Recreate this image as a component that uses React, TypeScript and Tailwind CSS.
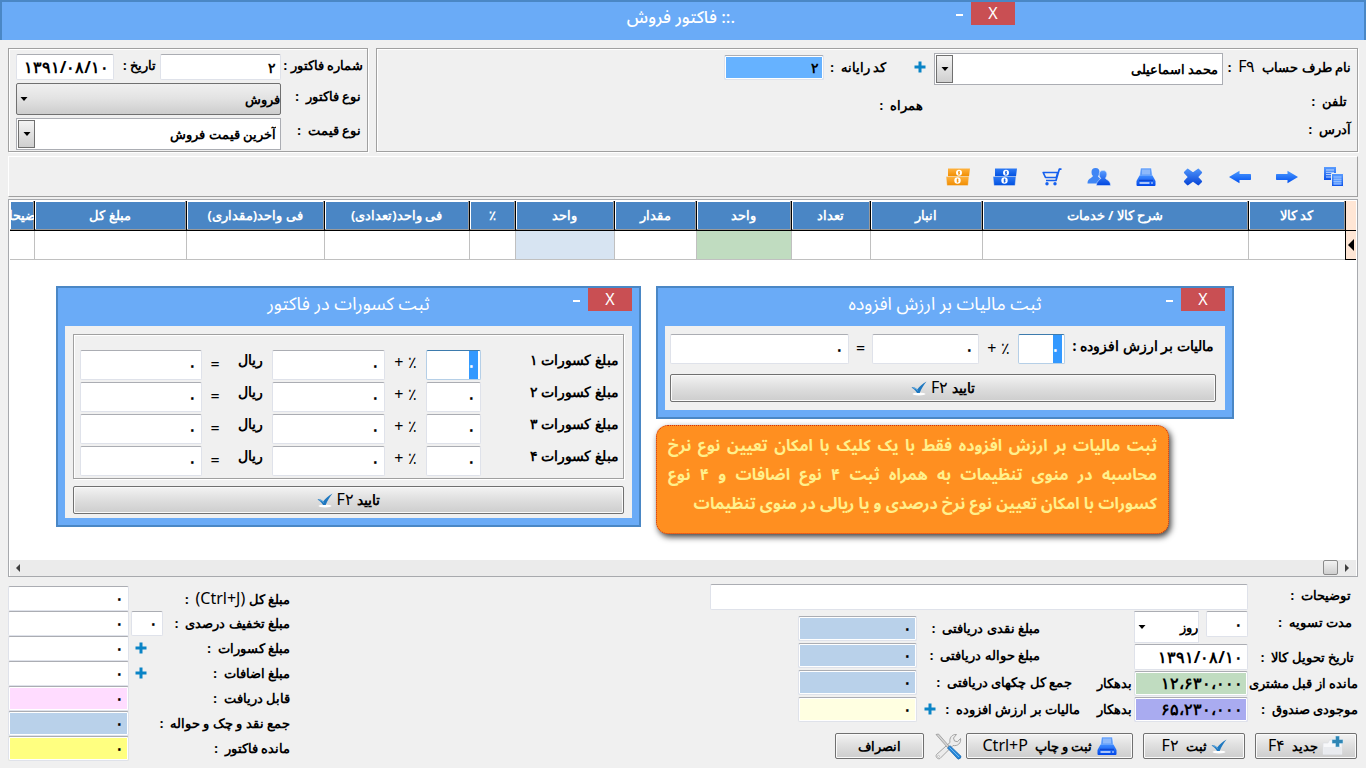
import type { ReactNode } from "react";

const field = "block min-w-0 rounded-xs border px-1 text-right font-bold outline-none";
const edge = "border-[#dfe2ea] border-t-[#abadb3]";
const plain = `${field} ${edge} bg-white text-base`;
const zero = `${field} ${edge} h-[25px] flex-none text-base shadow-[inset_0_0_0_1px_#fff]`;
const selected = `${field} border-[#b5cfe7] border-t-[#3d7bad] bg-[linear-gradient(to_left,#fff_2px,#3399ff_2px,#3399ff_11px,#fff_11px)] text-base text-white`;
const groove = "border border-[#a0a0a0] shadow-[1px_1px_0_#fff,inset_1px_1px_0_#fff]";
const button = "flex items-center justify-center rounded-xs border border-[#707070] bg-linear-to-b from-[#f3f3f3] from-0% via-[#dedede] via-50% to-[#cdcdcd] font-bold shadow-[inset_0_0_0_1px_#fafafa]";

/* Icons */
function PlusIcon() {
    return (
        <svg viewBox="0 0 12 12" className="size-3">
            <path d="M4.500 .5h3v4h4v3h-4v4h-3v-4h-4v-3h4z" fill="#0a84c6" />
        </svg>
    );
}

function CheckIcon() {
    return (
        <svg viewBox="0 0 16 16" className="size-4">
            <ellipse cx="8" cy="14" rx="6.500" ry="1.500" fill="#fff" />
            <path d="M.5 7.500c2-.5 4.200.3 5.700 2C8.500 6.500 11.500 3.500 15.500 1.500c-3 3.500-5 7-6.800 11.500H6C5 11 3 9 .5 7.500z" fill="#1f78c0" />
            <path d="M2.500 8c1.800.2 3 1 4 2.500" stroke="#6db6ea" fill="none" />
        </svg>
    );
}

function Gradient({ id, from, to }: { id: string; from: string; to: string }) {
    return (
        <defs>
            <linearGradient id={id} x1="0" y1="0" x2="0" y2="1">
                <stop offset="0" stopColor={from} />
                <stop offset="1" stopColor={to} />
            </linearGradient>
        </defs>
    );
}

function PrinterIcon() {
    return (
        <svg viewBox="0 0 20 20" className="size-5">
            <Gradient id="printer" from="#3f8cff" to="#0046e8" />
            <path d="M4.500 1h11l1 8h-13z" fill="#5f9cf8" stroke="#fff" strokeWidth=".6" />
            <path d="M6 2.500h8v5H6z" fill="#8db9fb" />
            <path d="M3.500 8.500h13l3 5.500v4q0 1-1 1h-17q-1 0-1-1v-4z" fill="url(#printer)" />
            <path d="M3 13.300h14" stroke="#0a3fc8" strokeWidth="1" />
            <path d="M3.500 16h10" stroke="#fff" strokeWidth="1.300" />
            <circle cx="16" cy="16" r=".8" fill="#fff" />
        </svg>
    );
}

function CopyIcon() {
    return (
        <svg viewBox="0 0 20 20" className="size-5">
            <Gradient id="copy" from="#5a9dff" to="#0a50e8" />
            <path d="M0 0h12v13H0z" fill="url(#copy)" />
            <path d="M2 3h8M2 5.300h8M2 7.600h8M2 10h8" stroke="#d3e5ff" strokeWidth=".9" />
            <path d="M7.500 6.500h12v13h-12z" fill="url(#copy)" stroke="#f0f0f0" />
            <path d="M9.500 8.500h8v9h-8z" fill="#5c9bff" />
            <path d="M9.500 10h8M9.500 12.300h8M9.500 14.600h8M9.500 17h8" stroke="#a9ccff" strokeWidth=".8" />
        </svg>
    );
}

function ArrowIcon({ flip }: { flip?: boolean }) {
    return (
        <svg viewBox="0 0 22 14" className={flip ? "h-[14px] w-[22px] -scale-x-100" : "h-[14px] w-[22px]"}>
            <Gradient id="arrow" from="#4e9bff" to="#0050f0" />
            <path d="M0 4.700q0-.7.700-.7h10.800V.8L22 7l-10.500 6.200V10H.7q-.7 0-.7-.7z" fill="url(#arrow)" />
        </svg>
    );
}

function DeleteIcon() {
    return (
        <svg viewBox="0 0 18 18" className="size-5">
            <Gradient id="delete" from="#4a8ff8" to="#0a48d8" />
            <path d="M4.300 2.500 9 6l4.700-3.500 2.500 2.500L12.500 9l3.700 4-2.500 2.500L9 12l-4.700 3.500L1.800 13l3.700-4-3.700-4z" fill="url(#delete)" stroke="url(#delete)" strokeLinejoin="round" strokeWidth="2" />
        </svg>
    );
}

function UsersIcon() {
    return (
        <svg viewBox="0 0 24 20" className="h-5 w-6">
            <Gradient id="users" from="#5a9dff" to="#0046e0" />
            <path d="M8.500 1c3 0 4.200 2 4 4.500-.2 2-1 3-1.500 4 1 1.500 3.500 2 3.500 7H.5c0-5 4-5 5.500-7.500-1-1-1.500-2-1.500-4C4.500 2.500 6 1 8.500 1z" fill="#3f86f5" />
            <path d="M16 3.500c3 0 4 2 3.800 4.300-.2 1.700-.9 2.500-1.400 3.400 1.200 2 5.100 2 5.100 7.300H9.500c0-4.500 3-5 4.300-7.300-1-1-1.500-1.700-1.600-3.400C12 5.500 13.200 3.500 16 3.500z" fill="url(#users)" stroke="#cfe0fa" strokeWidth=".6" />
        </svg>
    );
}

function CartIcon() {
    return (
        <svg viewBox="0 0 20 18" className="h-[18px] w-5">
            <path d="M19.500 1.200h-2.200L14 12.500H4M1.200 4.500h14.600l-1.500 5H3.500z" fill="none" stroke="#1660ee" strokeWidth="1.700" strokeLinejoin="round" />
            <circle cx="5" cy="15.700" r="1.700" fill="#1660ee" />
            <circle cx="13" cy="15.700" r="1.700" fill="#1660ee" />
        </svg>
    );
}

function MoneyIcon({ id, from, to }: { id: string; from: string; to: string }) {
    return (
        <svg viewBox="0 0 24 18" className="h-[18px] w-6">
            <Gradient id={id} from={from} to={to} />
            <path d="M2 .5h22L23 8.500H2z" fill={`url(#${id})`} />
            <circle cx="13" cy="4.800" r="3" fill="#fff" />
            <path d="M14 3.800h-1.500v1.100h1V6H12M13 3v3.600" stroke={to} strokeWidth=".7" fill="none" />
            <path d="M0 8.500h23l-1 9H1z" fill={`url(#${id})`} stroke="#f0f0f0" strokeWidth=".4" />
            <circle cx="11.500" cy="12.500" r="3.200" fill="#fff" />
            <path d="M12.600 11.400H11v1.200h1.200v1.200h-1.600M11.500 10.500v4" stroke={to} strokeWidth=".7" fill="none" />
        </svg>
    );
}

function NewIcon() {
    return (
        <svg viewBox="0 0 22 20" className="h-5 w-[22px]">
            <path d="M1 7h5l1.500-3H15l5 4v10.500H1z" fill="#f7f8fa" stroke="#dcdfe4" strokeWidth=".7" />
            <path d="M1.500 11h18v7h-18z" fill="#e9ebef" />
            <path d="M13.500 0h4v3.500H21v4h-3.500V11h-4V7.500H10v-4h3.500z" fill="#2f86b5" stroke="#d7ecf8" strokeWidth=".5" />
        </svg>
    );
}

function ToolsIcon() {
    return (
        <svg viewBox="0 0 28 28" className="size-7">
            <path d="M2.500 22.500 16 10.500c-1-4.500 2-8.500 6.500-8l-3 3.500 1 3 3 .7 3-3.200c1 4.500-3 8-7.500 7L6 26.500c-2 1.200-5-1.500-3.500-4z" fill="#ececec" stroke="#9b9b9b" strokeWidth=".9" />
            <circle cx="4.500" cy="24.300" r="1" fill="#fff" stroke="#9b9b9b" strokeWidth=".5" />
            <path d="m2 2.500 2.500-.5L15 14l-1.500 1.500z" fill="#d4d4d4" stroke="#8d8d8d" strokeWidth=".7" />
            <path d="m13.500 16 2.500-2.300 11 10.500q.5 2.300-3 3z" fill="#2586d8" stroke="#1664ab" strokeWidth=".7" />
            <path d="m15.500 15.500 9.500 9.500" stroke="#7dc0f5" strokeWidth=".9" />
        </svg>
    );
}

function DownArrow() {
    return (
        <svg viewBox="0 0 8 4" className="h-1 w-2">
            <path d="M.5 0h7L4 4z" fill="#000" />
        </svg>
    );
}

function Latin({ children }: { children: ReactNode }) {
    return <span className="text-base leading-5 font-normal">{children}</span>;
}

/* Label text followed by a spaced colon */
function Colon({ children }: { children: ReactNode }) {
    return <>{children}&nbsp; :</>;
}

/* Drop-down with its own arrow on the left side */
type SelectProps = { id: string; value: string; size: string; look: "combo" | "button" | "plain" };

function Select({ id, value, size, look }: SelectProps) {
    const looks = {
        combo: "border-[#abadb3] bg-white pr-1",
        button: "rounded-xs border-[#707070] bg-linear-to-b from-[#f0f0f0] from-0% via-[#e2e2e2] via-50% to-[#cdcdcd]",
        plain: "border-[#dfe2ea] border-t-[#abadb3] bg-white",
    };
    return (
        <div className={`relative ${size}`}>
            <select id={id} className={`h-full w-full appearance-none border pl-6 font-bold outline-none ${looks[look]}`}>
                <option>{value}</option>
            </select>
            <span
                className={
                    look === "combo"
                        ? "pointer-events-none absolute inset-y-0.5 left-0.5 flex w-[17px] items-center justify-center border border-[#707070] bg-linear-to-b from-[#f3f3f3] to-[#cfcfcf]"
                        : "pointer-events-none absolute inset-y-0 left-1 flex items-center"
                }
            >
                <DownArrow />
            </span>
        </div>
    );
}

function WindowButtons() {
    return (
        <div className="flex items-start">
            <button className="h-[23px] w-11 bg-[#c94f53] text-base leading-[23px] text-white">X</button>
            <button aria-label="کوچک کردن" className="flex h-[26px] w-6 items-center justify-center">
                <span className="h-0.5 w-[7px] bg-white" />
            </button>
        </div>
    );
}

function Dialog({ title, size, children }: { title: string; size: string; children: ReactNode }) {
    return (
        <section className={`border-2 border-[#4a87c5] bg-[#6aabf7] px-[7px] pb-[7px] ${size}`}>
            <header className="grid h-[38px] grid-cols-[1fr_auto_1fr]">
                <WindowButtons />
                <h2 className="pt-0.5 font-['Noto_Sans_Arabic',sans-serif] text-lg text-white">{title}</h2>
            </header>
            <div className="bg-[#f0f0f0]">{children}</div>
        </section>
    );
}

function ConfirmButton() {
    return (
        <button className={`${button} h-7 w-full gap-1 text-sm`}>
            <span>تایید <Latin>F۲</Latin></span>
            <CheckIcon />
        </button>
    );
}

function TaxDialog() {
    return (
        <Dialog title="ثبت مالیات بر ارزش افزوده" size="w-full">
            <div className="flex flex-col gap-2.5 pt-2 pr-[9px] pb-2 pl-[5px]">
                <div className="flex items-start text-base">
                    <label htmlFor="tax" className="w-[151px] pt-0.5 pr-0.5 text-sm font-bold">مالیات بر ارزش افزوده :</label>
                    <input id="tax" defaultValue="۰" className={`${selected} h-[30px] w-[47px]`} />
                    <span className="w-[39px] pt-0.5 text-center">٪ +</span>
                    <input aria-label="مبلغ مالیات" defaultValue="۰" className={`${plain} h-[30px] w-[107px]`} />
                    <span className="w-[23px] pt-0.5 text-center">=</span>
                    <input aria-label="جمع مالیات" defaultValue="۰" className={`${plain} h-[30px] flex-1`} />
                </div>
                <ConfirmButton />
            </div>
        </Dialog>
    );
}

function DeductionsDialog() {
    return (
        <Dialog title="ثبت کسورات در فاکتور" size="w-[585px]">
            <div className="flex flex-col gap-[7px] px-2 pt-2 pb-1">
                <div className={`${groove} flex flex-col gap-0.5 pt-[15px] pr-1 pb-0.5 pl-1.5`}>
                    {["۱", "۲", "۳", "۴"].map((n, i) => (
                        <div key={n} className="flex items-start text-base">
                            <label htmlFor={`kosurat-${n}`} className="w-[138px] text-sm font-bold">مبلغ کسورات {n}</label>
                            <input id={`kosurat-${n}`} defaultValue="۰" className={`${i === 0 ? selected : plain} h-[30px] w-[55px]`} />
                            <span className="w-[41px] text-center">٪ +</span>
                            <input aria-label={`مبلغ ${n}`} defaultValue="۰" className={`${plain} h-[30px] w-[113px]`} />
                            <span className="w-[44px] text-center text-sm font-bold">ریال</span>
                            <span className="w-[26px] pt-0.5 text-center">=</span>
                            <input aria-label={`جمع ${n}`} defaultValue="۰" className={`${plain} h-[30px] flex-1`} />
                        </div>
                    ))}
                </div>
                <ConfirmButton />
            </div>
        </Dialog>
    );
}

const columns = [
    { name: "کد کالا", width: "w-[97px]", cell: "" },
    { name: "شرح کالا / خدمات", width: "", cell: "" },
    { name: "انبار", width: "w-[112px]", cell: "" },
    { name: "تعداد", width: "w-[79px]", cell: "" },
    { name: "واحد", width: "w-[95px]", cell: "bg-[#c0dcc0]" },
    { name: "مقدار", width: "w-[82px]", cell: "" },
    { name: "واحد", width: "w-[99px]", cell: "bg-[#d7e4f2]" },
    { name: "٪", width: "w-[46px]", cell: "" },
    { name: "فی واحد(تعدادی)", width: "w-[145px]", cell: "" },
    { name: "فی واحد(مقداری)", width: "w-[138px]", cell: "" },
    { name: "مبلغ کل", width: "w-[152px]", cell: "" },
    { name: "توضیحات", width: "w-6", cell: "" },
];

function ItemsTable() {
    return (
        <table className="w-full table-fixed border-collapse">
            <thead>
                <tr className="h-[29px] border-b border-black">
                    <th className="w-[11px] border-l border-black bg-[#ffe6d5]" />
                    {columns.map((c, i) => (
                        <th key={i} scope="col" className={`overflow-hidden border-l border-black bg-[#4a86c5] p-0 font-bold whitespace-nowrap text-white shadow-[inset_-1px_-1px_0_#9a9a9a,inset_1px_1px_0_#fff] last:border-l-0 ${c.width}`}>
                            <span className="flex justify-center">{c.name}</span>
                        </th>
                    ))}
                </tr>
            </thead>
            <tbody>
                <tr className="h-[29px] border-b border-[#c0c0c0]">
                    <td className="border-b border-l border-black bg-[#ffe6d5] p-0">
                        <svg viewBox="0 0 6 12" className="mx-auto h-3 w-1.5">
                            <path d="M6 0v12L0 6z" />
                        </svg>
                    </td>
                    {columns.map((c, i) => (
                        <td key={i} className={`border-l border-[#c0c0c0] last:border-l-0 ${c.cell}`} />
                    ))}
                </tr>
            </tbody>
        </table>
    );
}

const tools = [
    { name: "کپی", icon: <CopyIcon /> },
    { name: "بعدی", icon: <ArrowIcon /> },
    { name: "قبلی", icon: <ArrowIcon flip /> },
    { name: "حذف", icon: <DeleteIcon /> },
    { name: "چاپ", icon: <PrinterIcon /> },
    { name: "اشخاص", icon: <UsersIcon /> },
    { name: "خرید", icon: <CartIcon /> },
    { name: "دریافت", icon: <MoneyIcon id="money-blue" from="#2f7bf5" to="#0050e0" /> },
    { name: "پرداخت", icon: <MoneyIcon id="money-orange" from="#ffb340" to="#f08c00" /> },
];

const totals = [
    { id: "total", label: <>مبلغ کل <Latin>(Ctrl+J)</Latin></>, color: "bg-white" },
    { id: "discount", label: "مبلغ تخفیف درصدی", color: "bg-white", percent: true },
    { id: "minus", label: "مبلغ کسورات", color: "bg-white", plus: true },
    { id: "extra", label: "مبلغ اضافات", color: "bg-white", plus: true },
    { id: "receivable", label: "قابل دریافت", color: "bg-[#ffdcff]" },
    { id: "cash", label: "جمع نقد و چک و حواله", color: "bg-[#b9d1ea]" },
    { id: "rest", label: "مانده فاکتور", color: "bg-[#ffff80]" },
];

const received = [
    { id: "r-cash", label: "مبلغ نقدی دریافتی", color: "bg-[#b9d1ea]", pad: "pr-10" },
    { id: "r-transfer", label: "مبلغ حواله دریافتی", color: "bg-[#b9d1ea]", pad: "pr-10" },
    { id: "r-cheque", label: "جمع کل چکهای دریافتی", color: "bg-[#b9d1ea]", pad: "pr-2" },
    { id: "r-tax", label: "مالیات بر ارزش افزوده", color: "bg-[#ffffe1]", pad: "", plus: true },
];

export default function App() {
    return (
        <div dir="rtl" className="flex min-h-screen flex-col bg-[#f0f0f0] font-['Noto_Sans',sans-serif] text-[13px] leading-5 text-black">
            <header className="grid h-10 grid-cols-[1fr_auto_1fr] border-x-2 border-t-2 border-[#4a87c5] bg-[#6aabf7]">
                <div className="pr-[349px]">
                    <WindowButtons />
                </div>
                <h1 className="pr-1 font-['Noto_Sans_Arabic',sans-serif] text-[17px] leading-8 font-medium text-white">.:: فاکتور فروش</h1>
            </header>

            <main className="flex flex-1 flex-col px-2 pt-2">
                <div className="flex gap-2">
                    {/* Account */}
                    <section className={`${groove} flex h-[104px] flex-1 flex-col pt-1 pr-1.5 font-bold`}>
                        <div className="flex">
                            <label htmlFor="account" className="w-[128px] pt-[3px]"><Colon>نام طرف حساب &nbsp;<Latin>F۹</Latin></Colon></label>
                            <Select id="account" value="محمد اسماعیلی" size="h-8 w-[289px]" look="combo" />
                            <button aria-label="حساب جدید" className="mr-2 flex h-7 w-3 items-center"><PlusIcon /></button>
                            <label htmlFor="code" className="w-[90px] pt-1 pr-7 whitespace-nowrap"><Colon>کد رایانه</Colon></label>
                            <input id="code" defaultValue="۲" className={`${field} ${edge} mt-0.5 h-[25px] w-[100px] bg-[#66b2ff] text-sm shadow-[inset_0_0_0_1px_#fff]`} />
                        </div>
                        <div className="flex pt-1.5">
                            <span className="w-[428px] pr-1"><Colon>تلفن</Colon></span>
                            <span className="pt-1"><Colon>همراه</Colon></span>
                        </div>
                        <span className="pt-1"><Colon>آدرس</Colon></span>
                    </section>

                    {/* Invoice */}
                    <section className={`${groove} grid h-[104px] w-[360px] grid-cols-[82px_1fr] gap-y-0.5 pt-[5px] pr-1 pl-[7px] font-bold`}>
                        <label htmlFor="number" className="pt-px whitespace-nowrap">شماره فاکتور :</label>
                        <div className="flex">
                            <input id="number" defaultValue="۲" className={`${field} ${edge} h-[26px] w-[121px] bg-white text-sm`} />
                            <label htmlFor="date" className="flex-1 pt-px pr-1 whitespace-nowrap">تاریخ :</label>
                            <input id="date" defaultValue="۱۳۹۱/۰۸/۱۰" className={`${field} ${edge} h-[26px] w-[98px] bg-white text-base`} />
                        </div>
                        <label htmlFor="kind" className="pt-[3px] pr-0.5"><Colon>نوع فاکتور</Colon></label>
                        <Select id="kind" value="فروش" size="h-8 w-full" look="button" />
                        <label htmlFor="price" className="pt-0.5 pr-0.5"><Colon>نوع قیمت</Colon></label>
                        <Select id="price" value="آخرین قیمت فروش" size="h-8 w-full" look="combo" />
                    </section>
                </div>

                <nav className="mt-1 flex h-[41px] items-center border border-t-white border-r-[#a0a0a0] border-b-[#a0a0a0] border-l-white">
                    {tools.map((t) => (
                        <button key={t.name} aria-label={t.name} className="flex h-9 w-[47px] items-center justify-center">{t.icon}</button>
                    ))}
                </nav>

                {/* Items grid */}
                <section className="mt-0.5 border border-[#a7a9ad] bg-white px-px pt-px">
                    <ItemsTable />
                    <div className="flex h-[300px] justify-between pt-[26px] pr-[122px] pl-[46px]">
                        <div className="flex w-[578px] flex-col gap-1.5">
                            <TaxDialog />
                            <p className="w-[513px] self-end rounded-xl border border-dotted border-[#d03010] bg-[#ff8f20] px-[11px] pt-1.5 pb-3.5 font-['Noto_Sans_Arabic',sans-serif] text-base leading-[29px] font-bold text-[#fff08c] shadow-[2px_3px_6px_#404040]">
                                <span className="block [text-align-last:justify]">ثبت مالیات بر ارزش افزوده فقط با یک کلیک با امکان تعیین نوع نرخ</span>
                                <span className="block [text-align-last:justify]">محاسبه در منوی تنظیمات به همراه ثبت ۴ نوع اضافات و ۴ نوع</span>
                                <span className="block">کسورات با امکان تعیین نوع نرخ درصدی و یا ریالی در منوی تنظیمات</span>
                            </p>
                        </div>
                        <div>
                            <DeductionsDialog />
                        </div>
                    </div>
                    <div className="flex h-4 items-center bg-[#ebebeb]">
                        <button aria-label="اسکرول راست" className="flex w-[18px] justify-center">
                            <svg viewBox="0 0 4 8" className="h-2 w-1"><path d="M0 0v8l4-4z" fill="#404040" /></svg>
                        </button>
                        <span className="h-[15px] w-[15px] rounded-xs border border-[#8a8a8a] bg-linear-to-b from-[#f3f3f3] to-[#cfcfcf]" />
                        <span className="flex-1" />
                        <button aria-label="اسکرول چپ" className="flex w-4 justify-center">
                            <svg viewBox="0 0 4 8" className="h-2 w-1"><path d="M4 0v8L0 4z" fill="#404040" /></svg>
                        </button>
                    </div>
                </section>

                <div className="flex pt-[7px] font-bold">
                    <div className="flex flex-1 flex-col">
                        <div className="flex">
                            <label htmlFor="notes" className="w-[110px] pt-px pr-[7px]"><Colon>توضیحات</Colon></label>
                            <input id="notes" className={`${plain} h-[26px] w-[538px]`} />
                        </div>

                        <div className="flex pt-px">
                            <div className="flex w-[262px] flex-col gap-px">
                                <div className="flex">
                                    <label htmlFor="days" className="w-[110px] pt-px pr-1.5"><Colon>مدت تسویه</Colon></label>
                                    <input id="days" defaultValue="۰" className={`${plain} h-[26px] w-[42px]`} />
                                    <span className="w-[7px]" />
                                    <Select id="unit" value="روز" size="h-8 w-[65px]" look="plain" />
                                </div>
                                <div className="flex items-center">
                                    <label htmlFor="delivery" className="w-[110px] pr-1 whitespace-nowrap"><Colon>تاریخ تحویل کالا</Colon></label>
                                    <input id="delivery" defaultValue="۱۳۹۱/۰۸/۱۰" className={`${field} ${edge} h-[26px] w-[114px] bg-white text-base`} />
                                </div>
                                <div className="flex items-center">
                                    <label htmlFor="before" className="w-[110px] whitespace-nowrap">مانده از قبل مشتری</label>
                                    <input id="before" defaultValue="۱۲،۶۳۰،۰۰۰" className={`${field} ${edge} h-[25px] w-[114px] bg-[#c0dcc0] text-base shadow-[inset_0_0_0_1px_#fff]`} />
                                    <span className="pr-0.5">بدهکار</span>
                                </div>
                                <div className="flex items-center">
                                    <label htmlFor="fund" className="w-[110px] whitespace-nowrap"><Colon>موجودی صندوق</Colon></label>
                                    <input id="fund" defaultValue="۶۵،۲۳۰،۰۰۰" className={`${field} ${edge} h-[25px] w-[114px] bg-[#a9abf0] text-base shadow-[inset_0_0_0_1px_#fff]`} />
                                    <span className="pr-0.5">بدهکار</span>
                                </div>
                            </div>
                            <div className="flex flex-col gap-0.5 pt-[5px] pr-4">
                                {received.map((r) => (
                                    <div key={r.id} className="flex items-center">
                                        <label htmlFor={r.id} className={`w-[144px] whitespace-nowrap ${r.pad}`}><Colon>{r.label}</Colon></label>
                                        <span className="flex w-[19px]">
                                            {r.plus && <button aria-label="افزودن مالیات"><PlusIcon /></button>}
                                        </span>
                                        <input id={r.id} defaultValue="۰" className={`${zero} w-[119px] ${r.color}`} />
                                    </div>
                                ))}
                            </div>
                        </div>

                        <div className="flex items-center gap-1 pt-[11px] pr-px">
                            <div className="flex gap-2.5">
                                <button className={`${button} h-[26px] w-[102px] gap-1`}><NewIcon /><span>جدید &nbsp;<Latin>F۴</Latin></span></button>
                                <button className={`${button} h-[26px] w-[102px] gap-1`}><CheckIcon /><span>ثبت &nbsp;<Latin>F۲</Latin></span></button>
                                <button className={`${button} h-[26px] w-[167px] gap-1`}><PrinterIcon /><span>ثبت و چاپ &nbsp;<Latin>Ctrl+P</Latin></span></button>
                            </div>
                            <div className="flex items-center gap-2.5">
                                <button aria-label="تنظیمات" className="-my-1"><ToolsIcon /></button>
                                <button className={`${button} h-[26px] w-[89px]`}>انصراف</button>
                            </div>
                        </div>
                    </div>

                    {/* Totals */}
                    <div className="flex w-[282px] flex-col pt-0.5">
                        {totals.map((t) => (
                            <div key={t.id} className="flex items-center">
                                <label htmlFor={t.id} className="flex-1 whitespace-nowrap"><Colon>{t.label}</Colon></label>
                                {t.plus && <button aria-label="افزودن" className="ml-1.5"><PlusIcon /></button>}
                                {t.percent && <input aria-label="درصد تخفیف" defaultValue="۰" className={`${zero} ml-0.5 w-8 bg-white`} />}
                                <input id={t.id} defaultValue="۰" className={`${zero} w-[121px] ${t.color}`} />
                            </div>
                        ))}
                    </div>
                </div>
            </main>
        </div>
    );
}
